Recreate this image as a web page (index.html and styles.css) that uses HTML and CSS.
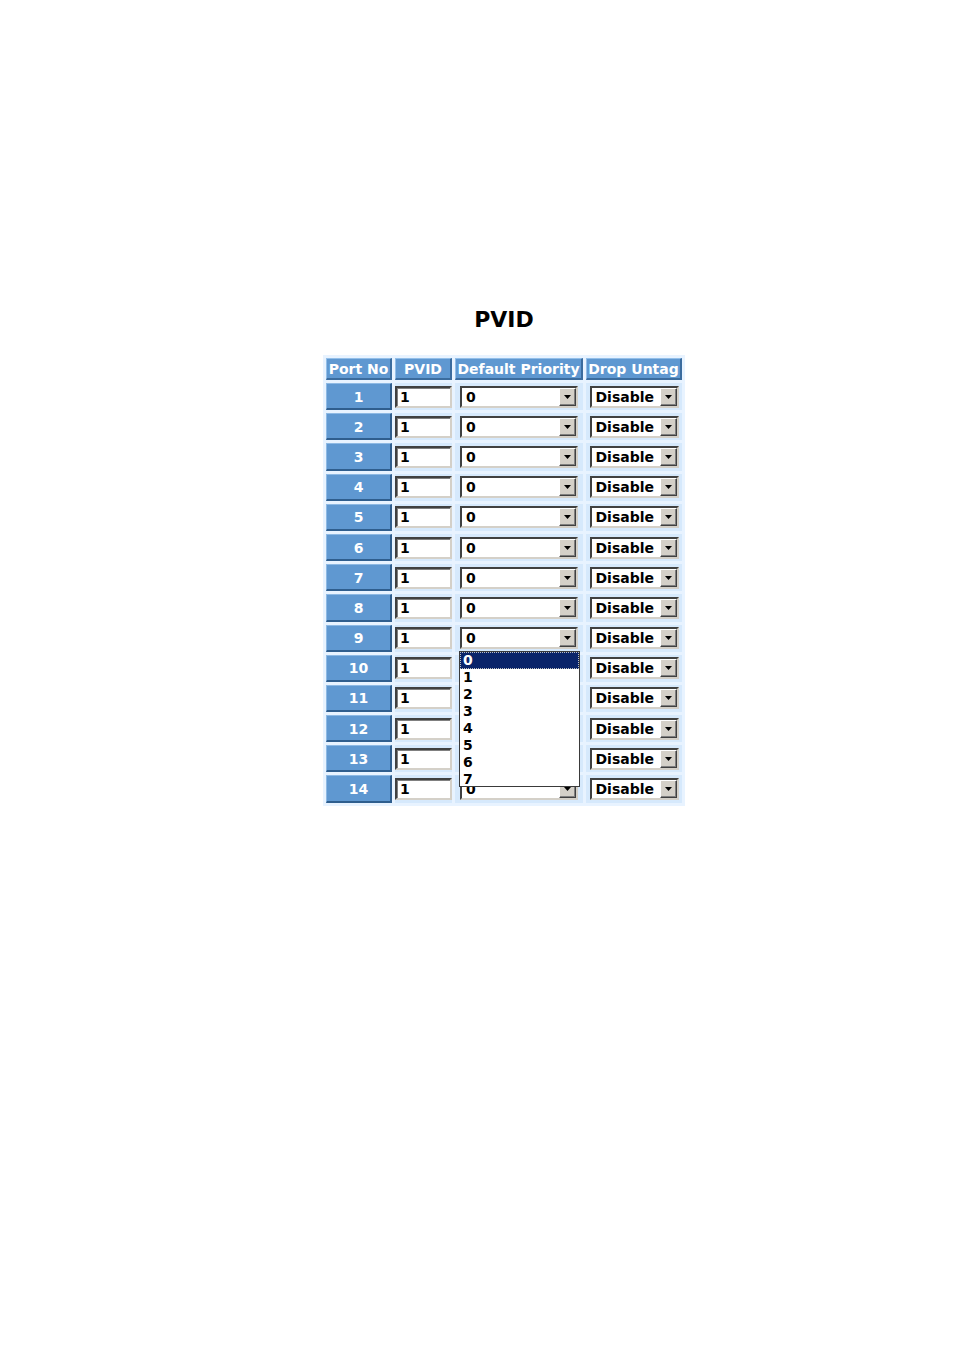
FILE: index.html
```html
<!DOCTYPE html>
<html>
<head>
<meta charset="utf-8">
<title>PVID</title>
<link rel="stylesheet" href="styles.css">
</head>
<body>
<div class="page">
  <h1 class="title">PVID</h1>
  <div class="table-wrap">
    <table class="pvid">
      <thead>
        <tr>
          <th class="c1">Port No</th>
          <th class="c2">PVID</th>
          <th class="c3">Default Priority</th>
          <th class="c4">Drop Untag</th>
        </tr>
      </thead>
      <tbody id="rows"></tbody>
    </table>
    <div class="listbox">
      <div class="opt sel">0</div>
      <div class="opt">1</div>
      <div class="opt">2</div>
      <div class="opt">3</div>
      <div class="opt">4</div>
      <div class="opt">5</div>
      <div class="opt">6</div>
      <div class="opt">7</div>
    </div>
  </div>
</div>
<script src="app.js"></script>
</body>
</html>
```
FILE: app.js
```js
(function () {
  var tb = document.getElementById('rows');
  var arrow = '<svg width="7" height="4" viewBox="0 0 7 4"><path d="M0 0H7L3.5 4Z" fill="#000"/></svg>';
  var html = '';
  for (var i = 1; i <= 14; i++) {
    html += '<tr>' +
      '<td class="port">' + i + '</td>' +
      '<td class="cell"><div class="inp">1</div></td>' +
      '<td class="cell"><div class="sel-box wide"><span class="val">0</span><span class="btn">' + arrow + '</span></div></td>' +
      '<td class="cell"><div class="sel-box narrow"><span class="val">Disable</span><span class="btn">' + arrow + '</span></div></td>' +
      '</tr>';
  }
  tb.innerHTML = html;
})();
```
FILE: styles.css
```css
html, body {
  margin: 0;
  padding: 0;
  background: #fff;
}
body {
  font-family: "DejaVu Sans", Verdana, sans-serif;
}
.page {
  display: flex;
  flex-direction: column;
  align-items: center;
  padding-left: 54px;
  padding-top: 308px;
}
.title {
  margin: 0 0 23px 0;
  font-size: 22px;
  line-height: 24px;
  font-weight: bold;
  color: #000;
}
.table-wrap {
  position: relative;
}
.pvid {
  border-collapse: separate;
  border-spacing: 3px;
  background: #e8f3ff;
  font-size: 14px;
  font-weight: bold;
}
.pvid th {
  height: 22px;
  padding: 0;
  box-sizing: border-box;
  background: #5f98d1;
  color: #fff;
  font-weight: bold;
  white-space: nowrap;
  text-align: center;
  border-style: solid;
  border-width: 1px 2px 2px 1px;
  border-color: #93bfe9 #3b6c9e #3b6c9e #93bfe9;
  line-height: 18px;
}
.c1 { width: 66px; }
.c2 { width: 57px; }
.c3 { width: 128px; }
.c4 { width: 96px; }
.pvid td {
  height: 27.2px;
  padding: 0;
  box-sizing: border-box;
}
.pvid td.port {
  background: #5f98d1;
  color: #fff;
  text-align: center;
  padding-top: 1px;
  border-style: solid;
  border-width: 1px 2px 2px 1px;
  border-color: #8db9e4 #2f5e8e #2f5e8e #8db9e4;
}
.pvid td.cell {
  background: #d6e9fc;
  vertical-align: middle;
}
.inp {
  box-sizing: border-box;
  width: 57px;
  height: 22px;
  background: #fff;
  color: #000;
  border-style: solid;
  border-width: 2px;
  border-color: #404040 #d4d0c8 #d4d0c8 #404040;
  box-shadow: inset 1px 1px 0 #808080;
  padding-left: 3px;
  line-height: 18px;
}
.sel-box {
  box-sizing: border-box;
  height: 22px;
  background: #fff;
  color: #000;
  display: flex;
  align-items: center;
  justify-content: space-between;
  border-style: solid;
  border-width: 2px;
  border-color: #404040 #d4d0c8 #d4d0c8 #404040;
  margin: 0 auto;
}
.sel-box.wide { width: 118px; }
.sel-box.narrow { width: 89px; }
.val {
  padding-left: 4px;
  line-height: 18px;
}
.btn {
  box-sizing: border-box;
  width: 17px;
  height: 18px;
  background: #d4d0c8;
  border-style: solid;
  border-width: 1px;
  border-color: #fff #404040 #404040 #fff;
  box-shadow: inset -1px -1px 0 #808080;
  display: flex;
  align-items: center;
  justify-content: center;
}
.btn svg { display: block; }
.listbox {
  position: absolute;
  left: 136px;
  top: 296px;
  width: 121px;
  height: 136px;
  box-sizing: border-box;
  background: #fff;
  border: 1px solid #3a3a3a;
  overflow: hidden;
  font-size: 14px;
  font-weight: bold;
}
.opt {
  height: 17px;
  line-height: 17px;
  padding-left: 3px;
  color: #000;
}
.opt.sel {
  background: #0a246a;
  color: #fff;
  outline: 1px dotted #c0c0c0;
  outline-offset: -1px;
}
```
